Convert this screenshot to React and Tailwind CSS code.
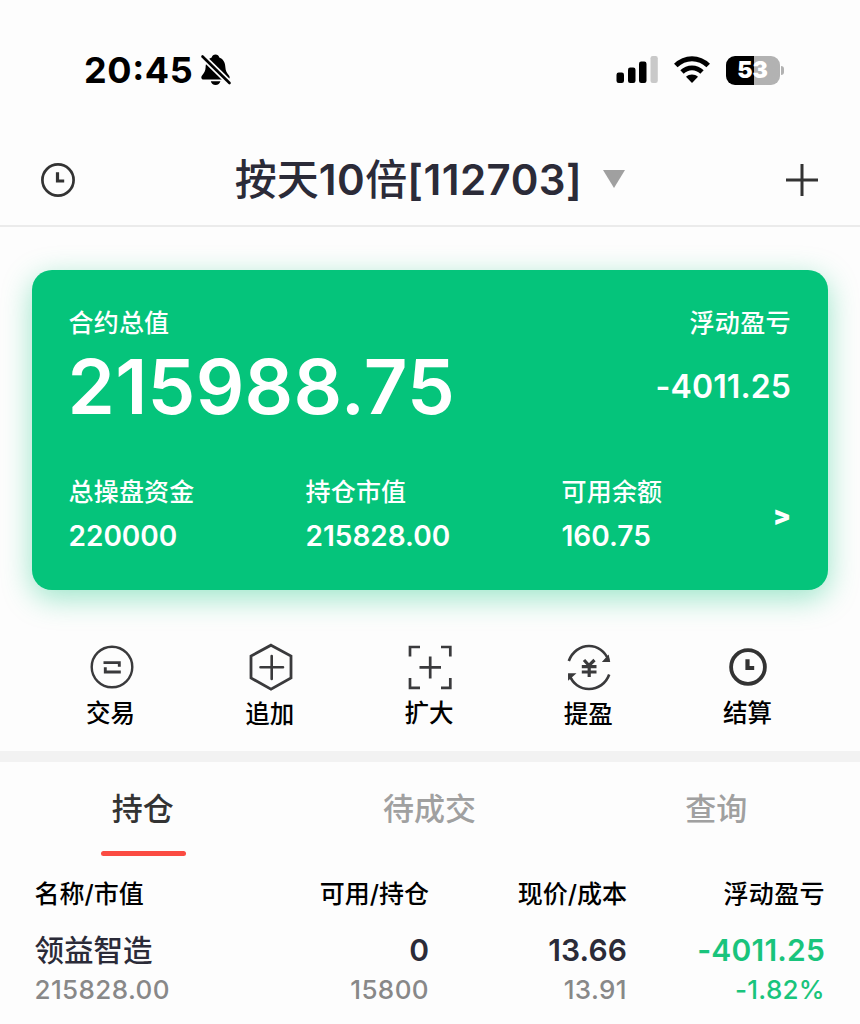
import React from 'react'

const summary = [
  { label: '总操盘资金', value: '220000', width: 'w-[237px]' },
  { label: '持仓市值', value: '215828.00', width: 'w-[256px]' },
  { label: '可用余额', value: '160.75', width: 'w-[200px]' },
]

const tabs = ['持仓', '待成交', '查询']

const positions = [
  { name: '领益智造', marketValue: '215828.00', available: '0', holding: '15800', price: '13.66', cost: '13.91', profit: '-4011.25', rate: '-1.82%' },
]

function BellOffIcon(){
  return (
    <svg width="32" height="34" viewBox="0 0 32 34">
      <path d="M15.5 1.5c-1.900 0-3.400 1.200-3.800 2.900-4.300 1.600-6 5.400-6.100 10.200-.1 3.500-1.500 5.500-3.400 7.700-1.600 1.900-.9 4.300 1.500 4.300h23.600c2.400 0 3.100-2.400 1.500-4.300-1.900-2.200-3.300-4.200-3.400-7.700-.1-4.800-1.800-8.600-6.100-10.200-.4-1.700-1.900-2.900-3.800-2.900z" fill="#000" />
      <path d="M10.800 28.300h9.600c-.5 2.200-2.400 3.700-4.800 3.700s-4.300-1.500-4.800-3.700z" fill="#000" />
      <path d="M2.500 3.500L29.500 30" stroke="#fdfdfd" strokeWidth="6" />
      <path d="M2.500 3.500L29.500 30" stroke="#000" strokeWidth="2.600" strokeLinecap="round" />
    </svg>
  )
}

function SignalIcon(){
  return (
    <svg width="42" height="28" viewBox="0 0 42 28">
      <rect x="0.500" y="16.500" width="7.500" height="10.500" rx="2.200" />
      <rect x="12" y="11.500" width="7.500" height="15.500" rx="2.200" />
      <rect x="23" y="5.500" width="7.500" height="21.500" rx="2.200" />
      <rect x="34.500" y="0" width="7.300" height="27" rx="2.200" fill="#c9c9c9" />
    </svg>
  )
}

function WifiIcon(){
  return (
    <svg width="36" height="28" viewBox="0 0 36 28">
      <path d="M1.800 9.600C11 .4 25 .4 34.200 9.600" fill="none" stroke="#000" strokeWidth="5" />
      <path d="M8 16c5.700-5.600 14.300-5.600 20 0" fill="none" stroke="#000" strokeWidth="4.800" />
      <path d="M12 20.700c3.400-3.100 8.600-3.100 12 0L18 26.900z" fill="#000" />
    </svg>
  )
}

function ClockIcon({ size, r, stroke, hand }){
  return (
    <svg width={size} height={size} viewBox={`${-size / 2} ${-size / 2} ${size} ${size}`} fill="none" stroke="#333" strokeWidth={stroke}>
      <circle cx="0" cy="0" r={r} />
      <path d="M-.5 -7.700V1H6.200" strokeWidth={hand} />
    </svg>
  )
}

function TradeIcon(){
  return (
    <svg width="44" height="48" viewBox="0 0 44 48" fill="none" stroke="#3a3a3c" strokeWidth="2.400">
      <circle cx="22" cy="24" r="20.300" />
      <path d="M13.500 19.600H29.300V23.800" strokeWidth="2.900" />
      <path d="M15.300 24.200V29H30.800" strokeWidth="2.900" />
    </svg>
  )
}

function AppendIcon(){
  return (
    <svg width="44" height="48" viewBox="0 0 44 48" fill="none" stroke="#3a3a3c" strokeWidth="2.800">
      <path d="M22 2.200L42 13V35L22 46.200L2 35V13z" />
      <path d="M11.500 24.300H34M22.700 13V36" strokeLinecap="round" strokeWidth="2.600" />
    </svg>
  )
}

function ExpandIcon(){
  return (
    <svg width="44" height="48" viewBox="0 0 44 48" fill="none" stroke="#3a3a3c" strokeWidth="2.700">
      <path d="M2 13.500V4H12M33 4H42.300V13.500M42.300 35V44.800H33M12 44.800H2V35" />
      <path d="M11.500 24.300H33M22.200 13.500V35.500" />
    </svg>
  )
}

function ProfitIcon(){
  return (
    <svg width="44" height="48" viewBox="0 0 44 48" fill="none" stroke="#3a3a3c" strokeWidth="2.600">
      <path d="M1.800 18C5 9 13 3 22 3c8.500 0 16 5.200 19.500 14" />
      <path d="M42.200 31.500C39 40.500 31 46 22 46c-9 0-16.500-5.500-19.500-14" />
      <path d="M41.200 13L42.300 18.300H36.500zM1.800 36V31H7.500z" fill="#3a3a3c" strokeWidth="1.500" />
      <path d="M17 17L22 22.500L27.500 17M14.800 23.700H29.500M14.800 29H29.500M22.200 22.500V34" strokeWidth="3.200" />
    </svg>
  )
}

const actions = [
  { label: '交易', icon: <TradeIcon /> },
  { label: '追加', icon: <AppendIcon />, shift: 'pt-px' },
  { label: '扩大', icon: <ExpandIcon /> },
  { label: '提盈', icon: <ProfitIcon />, shift: 'pt-px' },
  { label: '结算', icon: <ClockIcon size={48} r={16.9} stroke={3.8} hand={4.2} /> },
]

function StatusBar(){
  return (
    <div className="h-[135px] pt-[50px] pl-[84px] pr-[76px] flex items-start justify-between">
      <div className="h-10 flex items-center">
        <span className="text-[36px] leading-10 font-[750] tracking-[0.6px] text-black">20<span className="relative -top-[3px]">:</span>45</span>
        <span className="ml-[7px]"><BellOffIcon /></span>
      </div>
      <div className="h-10 flex items-center">
        <SignalIcon />
        <span className="ml-4"><WifiIcon /></span>
        <div className="ml-4 w-[54px] h-[29px] rounded-[9px] bg-linear-to-r from-black from-[52%] to-[#b2b2b2] to-[52%] flex items-center justify-center pt-px text-[23px] leading-none font-black text-white">53</div>
        <div className="ml-[1.500px] w-[3px] h-[9px] rounded-r-full bg-[#b2b2b2]"></div>
      </div>
    </div>
  )
}

export default function App(){
  const [tab, setTab] = React.useState('持仓')

  return (
    <div className="w-[860px] h-[1024px] overflow-hidden bg-[#fdfdfd] font-['Inter','Noto_Sans_CJK_SC',sans-serif] font-medium text-[#2b2b38]">
      <StatusBar />

      <header className="h-[92px] border-b-2 border-[#ebebeb] px-10 flex items-center justify-between">
        <button type="button"><ClockIcon size={36} r={15.6} stroke={2.7} hand={3.2} /></button>
        <h1 className="flex items-center text-[42px] leading-[60px] font-medium">
          <span>按天<span className="font-[560] tracking-[0.500px]">10</span>倍<span className="font-[560] tracking-[0.500px]">[112703]</span></span>
          <svg className="ml-[21px] -mt-[2px]" width="22" height="18" viewBox="0 0 22 18"><path d="M0 0H22L11 18z" fill="#a0a0a0" /></svg>
        </h1>
        <button type="button">
          <svg width="36" height="36" viewBox="0 0 36 36"><path d="M2 18H34M18 2V34" stroke="#333" strokeWidth="3" /></svg>
        </button>
      </header>

      {/* Account card */}
      <section className="mt-[43px] mx-8 h-[320px] rounded-[20px] bg-[#05c47b] shadow-[0_8px_30px_rgba(5,196,123,0.4)] pl-[36.500px] pr-[37px] pt-9 text-white">
        <div className="flex justify-between">
          <div>
            <div className="text-[25px] leading-[35px] tracking-[0.2px]">合约总值</div>
            <div className="-ml-px text-[76px] leading-[90px] font-[570] tracking-[0.3px]">215988.75</div>
          </div>
          <div className="text-right">
            <div className="text-[25px] leading-[35px] tracking-[0.4px]">浮动盈亏</div>
            <div className="text-[32px] leading-[91px] font-[560] tracking-[0.1px]">-4011.25</div>
          </div>
        </div>
        <div className="mt-[42px] flex">
          {summary.map(item => (
            <div key={item.label} className={item.width}>
              <div className="text-[25px] leading-9 tracking-[0.2px]">{item.label}</div>
              <div className="mt-1 text-[28px] leading-[44px] font-[560]">{item.value}</div>
            </div>
          ))}
          <div className="flex-1 pt-6 text-right text-[26px] leading-9 font-black">&gt;</div>
        </div>
      </section>

      <nav className="mx-8 mt-[53px] h-[108px] grid grid-cols-5">
        {actions.map(a => (
          <button type="button" key={a.label} className="flex flex-col items-center justify-start text-black">
            {a.icon}
            <span className={a.shift}><span className="block mt-1 mr-[2px] text-[24.500px] leading-9">{a.label}</span></span>
          </button>
        ))}
      </nav>

      <div className="h-[11px] bg-[#f2f2f2]"></div>

      <div className="grid grid-cols-3 h-[94px]">
        {tabs.map(t => (
          <button type="button" key={t} onClick={()=>setTab(t)} className={`flex flex-col items-center justify-between pt-[25px] text-[31px] leading-[44px] ${tab===t?'text-[#333]':'text-[#a0a0a0]'}`}>
            <span className="mr-px">{t}</span>
            <span className={`w-[85px] h-[5px] rounded-full ${tab===t?'bg-[#fb4b42]':''}`}></span>
          </button>
        ))}
      </div>

      {/* Positions */}
      <div className="pl-[34.500px] pr-[34.500px] pt-5">
        <div className="grid grid-cols-[197px_197.500px_198px_198px] text-[25px] leading-9 text-black">
          <div>名称/市值</div>
          <div className="text-right">可用/持仓</div>
          <div className="text-right">现价/成本</div>
          <div className="text-right tracking-[0.4px]">浮动盈亏</div>
        </div>
        {positions.map(p => (
          <div key={p.name} className="mt-[18px] grid grid-cols-[197px_197.500px_198px_198px]">
            <div>
              <div className="pt-px text-[29.500px] leading-[39px]">{p.name}</div>
              <div className="text-[26px] leading-10 tracking-[0.4px] text-[#888]">{p.marketValue}</div>
            </div>
            <div className="text-right">
              <div className="text-[30px] leading-10 font-[560]">{p.available}</div>
              <div className="text-[26px] leading-10 tracking-[0.4px] text-[#888]">{p.holding}</div>
            </div>
            <div className="text-right">
              <div className="text-[30px] leading-10 font-[560] tracking-[0.1px]">{p.price}</div>
              <div className="text-[26px] leading-10 tracking-[0.4px] text-[#888]">{p.cost}</div>
            </div>
            <div className="text-right text-[#19c47c]">
              <div className="text-[30px] leading-10 font-[560] tracking-[0.2px]">{p.profit}</div>
              <div className="text-[26px] leading-10 tracking-[0.3px]">{p.rate}</div>
            </div>
          </div>
        ))}
      </div>
    </div>
  )
}
